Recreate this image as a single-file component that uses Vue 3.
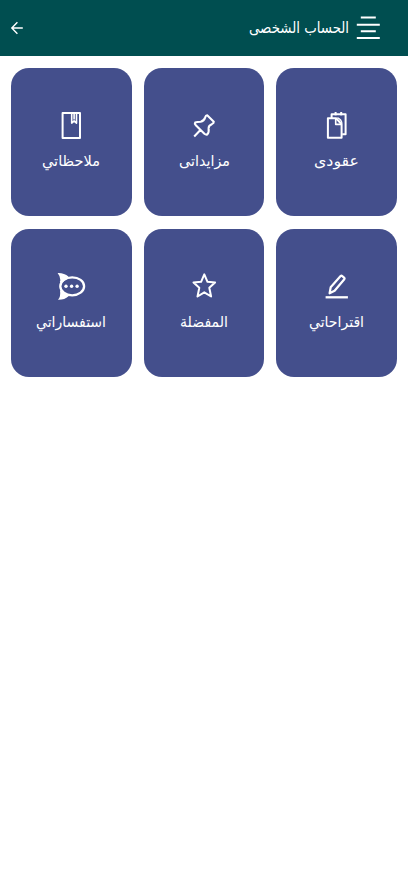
<script setup>
const cards = [
  { id: 'contracts', label: 'عقودى', width: 45 },
  { id: 'bids', label: 'مزايداتى', width: 51 },
  { id: 'notes', label: 'ملاحظاتي', width: 58 },
  { id: 'suggestions', label: 'اقتراحاتي', width: 55 },
  { id: 'favorites', label: 'المفضلة', width: 48 },
  { id: 'inquiries', label: 'استفساراتي', width: 70 },
]
</script>

<template>
  <div class="page" dir="rtl">
    <header class="bar">
      <svg class="menu" width="24" height="24" viewBox="0 0 24 24">
        <path d="M4.8 1.6H19.8M.8 8.8H23.8M4.8 15.3H19.8M.8 22H23.8" />
      </svg>
      <svg class="title" width="100" height="30" viewBox="0 0 100 30">
        <text x="50" y="20" textLength="100" lengthAdjust="spacingAndGlyphs">الحساب الشخصى</text>
      </svg>
      <svg class="back" width="14" height="14" viewBox="0 0 14 14">
        <path d="M12.8 7H1.9M7.4 1.3L1.8 7L7.4 12.7" />
      </svg>
    </header>
    <main class="grid">
      <section v-for="card in cards" :key="card.id" class="card">
        <svg class="icon" width="32" height="32" viewBox="0 0 32 32">
          <g v-if="card.id === 'contracts'">
            <path d="M6.9 8.2H15.1L20.6 14.2V27.7H6.9Z" />
            <path d="M14.7 8.8V14.4H20.5" stroke-width="1.6" />
            <path d="M10.6 8V4.3H24.6V24.2H21.2M14.6 2V5.6M20.2 2V5.6" stroke-width="2" />
            <path d="M16.4 7.6Q20.6 9.4 21 13.6" stroke-width="1.3" />
          </g>
          <path
            v-else-if="card.id === 'bids'"
            d="M6.2 26.4L12.4 20.1M7.2 12.4Q9 11.7 12.6 11.7Q16 11.2 17.2 7.4Q17.8 5.2 19.2 5.3L25.8 11.7Q26 13 23.8 14.2Q20.5 15.5 20.6 18.4Q21.3 22.4 19.1 24.6Q17.6 24.8 16.4 23.8L7.8 15.2Q6.3 13.7 7.2 12.4Z"
            stroke-width="2.1"
          />
          <g v-else-if="card.id === 'notes'">
            <path d="M7.6 3.1H25V28H7.6Z" />
            <path d="M16.7 3.5V13.1L19.1 10.8L21.5 13.1V3.5M19.1 4V9.5" stroke-width="1.6" />
          </g>
          <g v-else-if="card.id === 'suggestions'">
            <path d="M8.6 22.3L9.7 16.2L19.6 5Q20.4 4.3 21.3 5.1L23.3 6.8Q23.9 7.5 23.3 8.3L13.6 19.8Z" stroke-width="2.2" />
            <path d="M4.6 26.3H26.9" stroke-width="2.3" />
          </g>
          <path
            v-else-if="card.id === 'favorites'"
            d="M16.3 3.4L19.5 10.8L27.1 11.5L21.3 16.7L23.1 25.5L16.3 21.3L9.5 25.5L11.3 16.7L5.5 11.5L13.1 10.8Z"
          />
          <g v-else>
            <ellipse cx="17.2" cy="15.3" rx="11.9" ry="9" stroke-width="2.3" />
            <g fill="#fff" stroke="none">
              <path d="M2.6 1.9Q9.4 1.7 13.4 5.6L12.4 7.9Q9 9.2 7.2 11.8L4.8 10.8L5.4 9.2Q5.4 5 2.6 1.9Z" />
              <path d="M5 19.4L7.6 19.2Q10 22 13 23.2L13.5 25.3Q9.5 29 3 28.8Q6 25.4 5 19.4Z" />
              <circle cx="11" cy="15.3" r="1.7" />
              <circle cx="16.6" cy="15.3" r="1.7" />
              <circle cx="22.1" cy="15.3" r="1.7" />
            </g>
          </g>
        </svg>
        <svg class="label" :width="card.width" height="30" :viewBox="`0 0 ${card.width} 30`">
          <text :x="card.width / 2" y="20" :textLength="card.width" lengthAdjust="spacingAndGlyphs">{{ card.label }}</text>
        </svg>
      </section>
    </main>
  </div>
</template>

<style>
body {
  background: #fff;
}
</style>

<style scoped>
.page {
  min-height: 883px;
  font-family: "DejaVu Sans", sans-serif;
}
.bar {
  box-sizing: border-box;
  height: 56px;
  padding: 0 28px 0 10px;
  display: flex;
  align-items: center;
  background: #004e50;
}
.title {
  margin-right: 7px;
}
.back {
  margin-right: auto;
}
svg {
  display: block;
  overflow: visible;
  fill: none;
  stroke: #fff;
  stroke-width: 2;
}
.back {
  stroke-width: 1.4;
}
text {
  fill: #fff;
  stroke: none;
  text-anchor: middle;
  font-size: 15.5px;
}
.label text {
  font-size: 15px;
}
.grid {
  display: grid;
  grid-template-columns: repeat(3, 1fr);
  grid-auto-rows: 148px;
  gap: 13px 12px;
  padding: 11.7px 11px;
}
.card {
  box-sizing: border-box;
  display: flex;
  flex-direction: column;
  align-items: center;
  padding-top: 42.3px;
  border-radius: 18px;
  background: #444f8c;
}
.label {
  margin-top: 4px;
}
.icon {
  stroke-linejoin: round;
}
</style>
